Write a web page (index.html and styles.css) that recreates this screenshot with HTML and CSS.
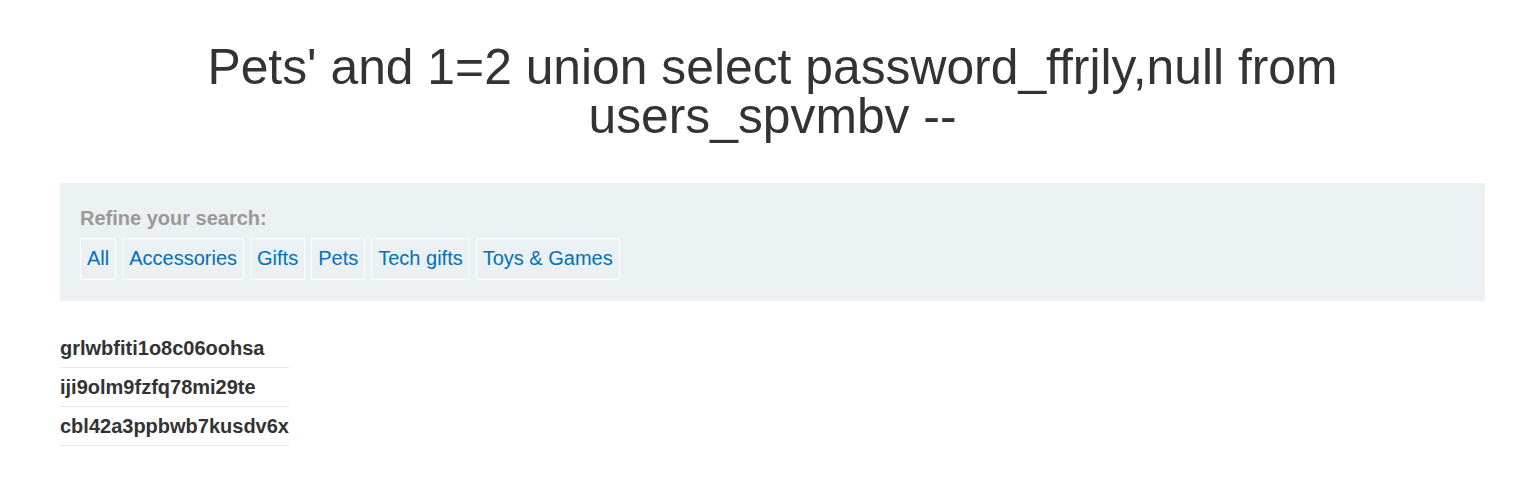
FILE: index.html
```html
<!DOCTYPE html>
<html lang="en">
<head>
  <meta charset="UTF-8" />
  <title>Filter</title>
  <link rel="stylesheet" href="styles.css">
</head>
<body>
  <div class="container">
    <h1 class="titulo">Pets' and 1=2 union select password_ffrjly,null from users_spvmbv --</h1>

    <!-- Filtro de categorias -->
    <section class="filtro">
      <p class="filtro-titulo">Refine your search:</p>
      <div class="filtro-links">
        <a href="#">All</a>
        <a href="#">Accessories</a>
        <a href="#">Gifts</a>
        <a href="#">Pets</a>
        <a href="#">Tech gifts</a>
        <a href="#">Toys &amp; Games</a>
      </div>
    </section>

    <!-- Resultados -->
    <table class="resultados">
      <tbody>
        <tr><th>grlwbfiti1o8c06oohsa</th></tr>
        <tr><th>iji9olm9fzfq78mi29te</th></tr>
        <tr><th>cbl42a3ppbwb7kusdv6x</th></tr>
      </tbody>
    </table>
  </div>
</body>
</html>
```

FILE: styles.css
```css
* { margin: 0; padding: 0; box-sizing: border-box; }

body {
  font-family: "Liberation Sans", Arial, sans-serif;
  background: #fff;
  color: #333;
}

.container {
  padding: 0 49px 0 60px;
}

.titulo {
  font-size: 49.8px;
  font-weight: normal;
  line-height: 49px;
  text-align: center;
  color: #333;
  padding: 43px 0 0;
  margin-bottom: 42px;
}

.filtro {
  background: #ebf0f2;
  padding: 24px 20px 21px;
}

.filtro-titulo {
  font-size: 20px;
  line-height: 22px;
  font-weight: bold;
  color: #999;
  margin-bottom: 9px;
}

.filtro-links {
  display: flex;
  gap: 6px;
}

.filtro-links a {
  font-size: 20px;
  color: #0071bc;
  text-decoration: none;
  border: 1px solid #fff;
  padding: 8px 6px 9px;
  line-height: 23px;
}

.resultados {
  border-collapse: collapse;
  margin-top: 27px;
}

.resultados th {
  font-size: 20px;
  line-height: 23px;
  text-align: left;
  font-weight: bold;
  color: #333;
  padding: 0 0 7px;
  height: 39px;
  vertical-align: bottom;
  border-bottom: 1px solid #e6e6e6;
}
```
